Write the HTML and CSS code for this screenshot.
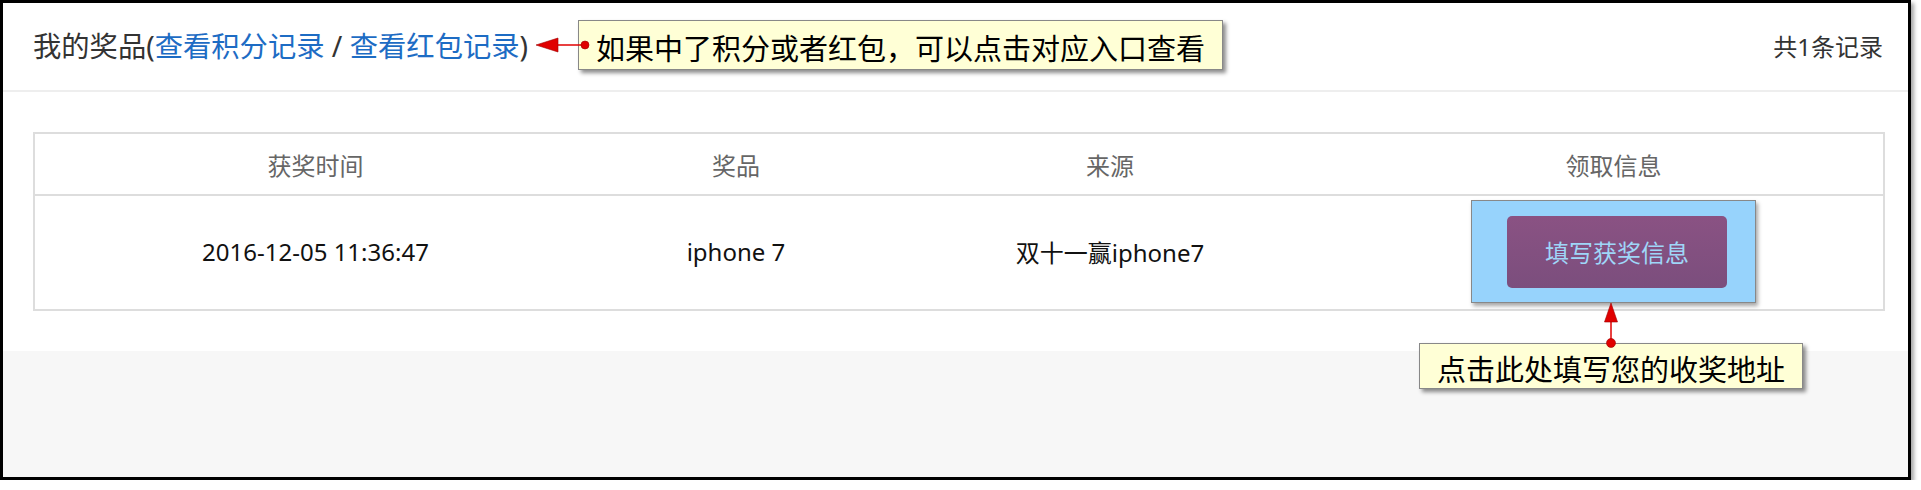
FILE: index.html
```html
<!DOCTYPE html>
<html lang="zh-CN">
<head>
<meta charset="utf-8">
<title>我的奖品</title>
<link rel="stylesheet" href="styles.css">
</head>
<body>
<div class="frame">
  <div class="panel">
    <div class="panel-head">
      <h2 class="title">我的奖品(<a href="#">查看积分记录</a> / <a href="#">查看红包记录</a>)</h2>
      <span class="count">共1条记录</span>
    </div>
    <div class="panel-body">
      <table class="prize-table">
        <colgroup>
          <col class="c1"><col class="c2"><col class="c3"><col class="c4">
        </colgroup>
        <thead>
          <tr><th>获奖时间</th><th>奖品</th><th>来源</th><th>领取信息</th></tr>
        </thead>
        <tbody>
          <tr>
            <td>2016-12-05 11:36:47</td>
            <td>iphone 7</td>
            <td>双十一赢iphone7</td>
            <td><div class="highlight"><button class="btn-fill">填写获奖信息</button></div></td>
          </tr>
        </tbody>
      </table>
    </div>
  </div>
  <div class="footer-grey"></div>

  <div class="note note-top">如果中了积分或者红包，可以点击对应入口查看</div>
  <svg class="arrow arrow-left" width="56" height="26" viewBox="0 0 56 26">
    <line x1="20" y1="13" x2="51" y2="13" stroke="#e00000" stroke-width="1.5"/>
    <polygon points="2,13 24,6 24,20" fill="#e00000" stroke="#a00000" stroke-width="0.6"/>
    <circle cx="51" cy="13" r="4" fill="#e00000" stroke="#a00000" stroke-width="0.6"/>
  </svg>

  <div class="note note-bottom">点击此处填写您的收奖地址</div>
  <svg class="arrow arrow-up" width="26" height="48" viewBox="0 0 26 48">
    <line x1="13" y1="19" x2="13" y2="42" stroke="#e00000" stroke-width="1.5"/>
    <polygon points="13,2 6.5,21 19.5,21" fill="#e00000" stroke="#a00000" stroke-width="0.6"/>
    <circle cx="13" cy="42" r="4.5" fill="#e00000" stroke="#a00000" stroke-width="0.6"/>
  </svg>
</div>
</body>
</html>
```
FILE: styles.css
```css
* { box-sizing: border-box; }

html, body {
  margin: 0;
  padding: 0;
  background: #ffffff;
}

body {
  font-family: "Noto Sans", "Noto Sans CJK SC", sans-serif;
  color: #333;
}

.frame {
  position: relative;
  width: 1911px;
  height: 480px;
  border: 3px solid #000;
  background: #fff;
  box-shadow: 3px 3px 4px rgba(0, 0, 0, 0.35), inset 4px 0 4px -2px rgba(0, 0, 0, 0.25);
  display: flex;
  flex-direction: column;
  overflow: visible;
}

.panel {
  background: #fff;
}

.panel-head {
  height: 89px;
  padding: 0 25px 0 30px;
  display: flex;
  align-items: center;
  justify-content: space-between;
  border-bottom: 2px solid #eeeeee;
}

.title {
  margin: 0;
  font-size: 28.3px;
  font-weight: normal;
  color: #333;
  line-height: 1;
}

.title a {
  color: #1d6cc4;
  text-decoration: none;
}

.count {
  font-size: 24px;
  color: #333;
  line-height: 1;
}

.panel-body {
  padding: 40px 25px 40px 30px;
}

.prize-table {
  width: 100%;
  border-collapse: collapse;
  table-layout: fixed;
  border: 2px solid #dddddd;
}

.prize-table .c1 { width: 562px; }
.prize-table .c2 { width: 280px; }
.prize-table .c3 { width: 468px; }
.prize-table .c4 { width: 540px; }

.prize-table th {
  height: 62px;
  font-size: 24px;
  font-weight: normal;
  color: #666;
  text-align: center;
  border-bottom: 2px solid #dddddd;
  padding: 0;
}

.prize-table td {
  height: 115px;
  font-size: 24px;
  color: #111;
  text-align: center;
  vertical-align: middle;
  padding: 0 0 3px 0;
}

.highlight {
  display: inline-block;
  vertical-align: middle;
  background: #97d3fc;
  border: 1px solid #888;
  padding: 15px 28px 14px 35px;
  box-shadow: 2px 3px 4px rgba(0, 0, 0, 0.35);
}

.btn-fill {
  display: block;
  width: 220px;
  height: 72px;
  border: none;
  border-radius: 5px;
  background: linear-gradient(#8a5283, #7b4e7d);
  color: #9fd6f8;
  font-family: "Noto Sans", "Noto Sans CJK SC", sans-serif;
  font-size: 24px;
  padding: 0;
}

.footer-grey {
  flex: 1;
  background: #f7f7f7;
}

.note {
  position: absolute;
  background: #ffffd6;
  border: 1px solid #888;
  box-shadow: 3px 3px 4px rgba(0, 0, 0, 0.45);
  color: #000;
  font-family: "Noto Sans CJK SC", "Noto Sans", sans-serif;
  font-size: 29px;
  white-space: nowrap;
  padding: 4px 17px 0 17px;
}

.note-top {
  left: 575px;
  top: 17px;
  line-height: 44px;
}

.note-bottom {
  left: 1416px;
  top: 340px;
  line-height: 40px;
}

.arrow {
  position: absolute;
  overflow: visible;
}

.arrow-left {
  left: 531px;
  top: 29px;
}

.arrow-up {
  left: 1595px;
  top: 298px;
}
```
